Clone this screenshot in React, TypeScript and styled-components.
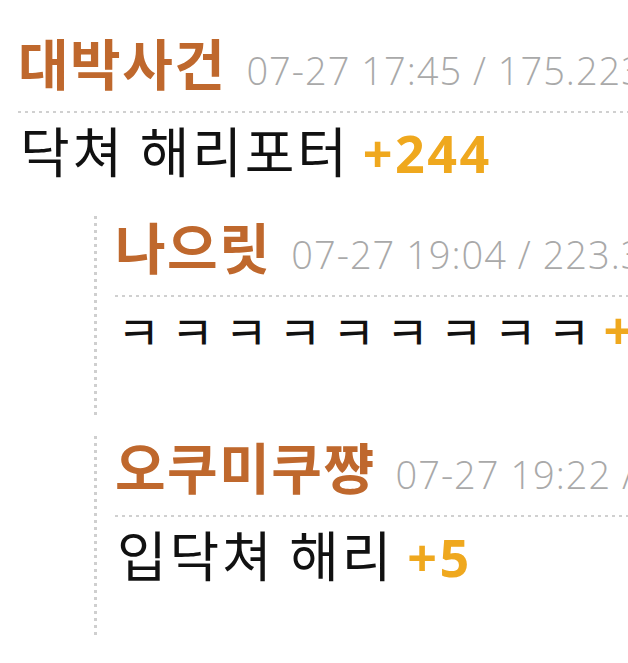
import React from 'react';
import styled, { createGlobalStyle } from 'styled-components';

const GlobalStyle = createGlobalStyle`
  html, body {
    margin: 0;
    padding: 0;
    background: #ffffff;
    overflow: hidden;
  }
  body {
    font-family: "Noto Sans CJK KR", "Noto Sans", sans-serif;
  }
`;

const Page = styled.div`
  width: 628px;
  height: 663px;
  padding: 33px 0 0 18px;
  box-sizing: border-box;
  overflow: hidden;
`;

const Comment = styled.div`
  white-space: nowrap;
`;

// replies are indented and carry a dotted rule down their left side
const Reply = styled(Comment)`
  height: 200px;
  box-sizing: border-box;
  margin-left: 76px;
  padding: 1px 0 0 21px;
  background-image: linear-gradient(to bottom, #cfcfcf 50%, transparent 50%);
  background-size: 3px 7px;
  background-repeat: repeat-y;
  background-position: left top;
`;

const Header = styled.div`
  display: flex;
  align-items: baseline;
  gap: 20px;
  height: 78px;
`;

const Name = styled.span`
  font-family: "Noto Sans CJK KR", sans-serif;
  font-weight: 700;
  font-size: 55px;
  letter-spacing: 1.5px;
  line-height: 56px;
  color: #bf682d;
`;

const Meta = styled.span`
  font-family: "Open Sans", "Noto Sans", sans-serif;
  font-weight: 300;
  font-size: 38px;
  letter-spacing: 1px;
  color: #a9a9a9;
`;

const Divider = styled.div`
  height: 2px;
  background-image: linear-gradient(to right, #d0d0d0 50%, transparent 50%);
  background-size: 7px 2px;
  background-repeat: repeat-x;
`;

const Body = styled.div<{ $jamo?: boolean }>`
  padding-left: 2px;
  font-family: "Noto Sans CJK KR", sans-serif;
  font-weight: 400;
  font-size: ${(p) => (p.$jamo ? 47 : 54)}px;
  letter-spacing: ${(p) => (p.$jamo ? 0 : 2.8)}px;
  line-height: ${(p) => (p.$jamo ? 66 : 74)}px;
  color: #111111;
`;

const Score = styled.span`
  font-family: "Open Sans", "Noto Sans", sans-serif;
  font-weight: 700;
  font-size: 52px;
  letter-spacing: 2.5px;
  color: #efa81e;
  margin-left: 13px;
`;

const Replies = styled.div`
  display: flex;
  flex-direction: column;
  gap: 20px;
  margin-top: 26px;
`;

type Item = { name: string; meta: string; text: string; score: string; jamo?: boolean };

const replies: Item[] = [
  { name: '나으릿', meta: '07-27 19:04 / 223.38.11.5', text: 'ㅋ ㅋ ㅋ ㅋ ㅋ ㅋ ㅋ ㅋ ㅋ', score: '+3', jamo: true },
  { name: '오쿠미쿠쨩', meta: '07-27 19:22 / 39.7.28.14', text: '입닥쳐 해리', score: '+5' },
];

export default function App() {
  return (
    <>
      <GlobalStyle />
      <Page>
        <Comment>
          <Header>
            <Name>대박사건</Name>
            <Meta>07-27 17:45 / 175.223.18.7</Meta>
          </Header>
          <Divider />
          <Body>
            닥쳐 해리포터<Score>+244</Score>
          </Body>
        </Comment>
        <Replies>
          {replies.map((r) => (
            <Reply key={r.name}>
              <Header>
                <Name>{r.name}</Name>
                <Meta>{r.meta}</Meta>
              </Header>
              <Divider />
              <Body $jamo={r.jamo}>
                {r.text}
                <Score>{r.score}</Score>
              </Body>
            </Reply>
          ))}
        </Replies>
      </Page>
    </>
  );
}
